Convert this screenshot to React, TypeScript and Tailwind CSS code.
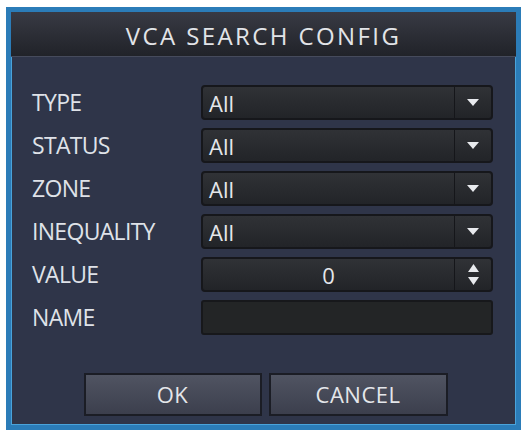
import React from 'react';

const font = { fontFamily: '"Open Sans", "Liberation Sans", sans-serif' };

const rows: { label: string; kind: 'select' | 'spin' | 'text'; value: string }[] = [
  { label: 'TYPE', kind: 'select', value: 'All' },
  { label: 'STATUS', kind: 'select', value: 'All' },
  { label: 'ZONE', kind: 'select', value: 'All' },
  { label: 'INEQUALITY', kind: 'select', value: 'All' },
  { label: 'VALUE', kind: 'spin', value: '0' },
  { label: 'NAME', kind: 'text', value: '' },
];

const DownArrow = () => (
  <svg width="12" height="7" viewBox="0 0 12 7">
    <path d="M0 0 H12 L6 7 Z" fill="#e8eaee" />
  </svg>
);

const Spinner = () => (
  <svg width="11" height="22" viewBox="0 0 11 22">
    <path d="M5.5 0 L11 8 H0 Z" fill="#e8eaee" />
    <path d="M0 13 H11 L5.5 21 Z" fill="#e8eaee" />
  </svg>
);

const Field = ({ kind, value }: { kind: 'select' | 'spin' | 'text'; value: string }) => {
  if (kind === 'text') {
    return <div className="h-[35px] w-[292px] rounded-[3px] border-2 border-[#17181b] bg-[#232526]" />;
  }
  return (
    <div className="flex h-[35px] w-[292px] rounded-[4px] border-2 border-[#16171b] bg-gradient-to-b from-[#303236] to-[#222428]">
      <div
        className={`flex flex-1 items-center text-[22px] leading-none text-[#e4e6ea] ${
          kind === 'spin' ? 'justify-center' : 'pl-[6px]'
        }`}
      >
        {value}
      </div>
      <div className="flex w-[37px] items-center justify-center border-l border-[#15161a]">
        {kind === 'spin' ? <Spinner /> : <DownArrow />}
      </div>
    </div>
  );
};

export default function App() {
  return (
    <div className="h-[437px] w-[524px] bg-white pl-[6px] pt-[7px]" style={font}>
      <div className="flex h-[423px] w-[515px] flex-col border-[5px] border-[#2b7cb8] bg-[#2f3549] shadow-[inset_0_0_0_1px_#4aa3da]">
        <div className="flex h-[45px] items-center justify-center border-b border-[#464b5c] bg-gradient-to-b from-[#383a44] to-[#212329] pt-[3px] text-[24px] tracking-[2.4px] text-[#e2e4e8]">
          VCA SEARCH CONFIG
        </div>
        <div className="flex flex-col gap-[8px] pl-[21px] pr-[23px] pt-[28px]">
          {rows.map((r) => (
            <div key={r.label} className="flex items-center justify-between">
              <span className="text-[23px] leading-none tracking-[-0.03em] text-[#dfe2e8]">{r.label}</span>
              <Field kind={r.kind} value={r.value} />
            </div>
          ))}
        </div>
        <div className="mt-[38px] flex justify-center gap-[7px] pl-[4px]">
          <button className="h-[43px] w-[178px] border-2 border-[#1b1d25] bg-gradient-to-b from-[#505462] to-[#3c3f4d] text-[22px] tracking-[0.5px] text-[#e4e6ea]">
            OK
          </button>
          <button className="h-[43px] w-[179px] border-2 border-[#1b1d25] bg-gradient-to-b from-[#505462] to-[#3c3f4d] text-[22px] tracking-[0.5px] text-[#e4e6ea]">
            CANCEL
          </button>
        </div>
      </div>
    </div>
  );
}
